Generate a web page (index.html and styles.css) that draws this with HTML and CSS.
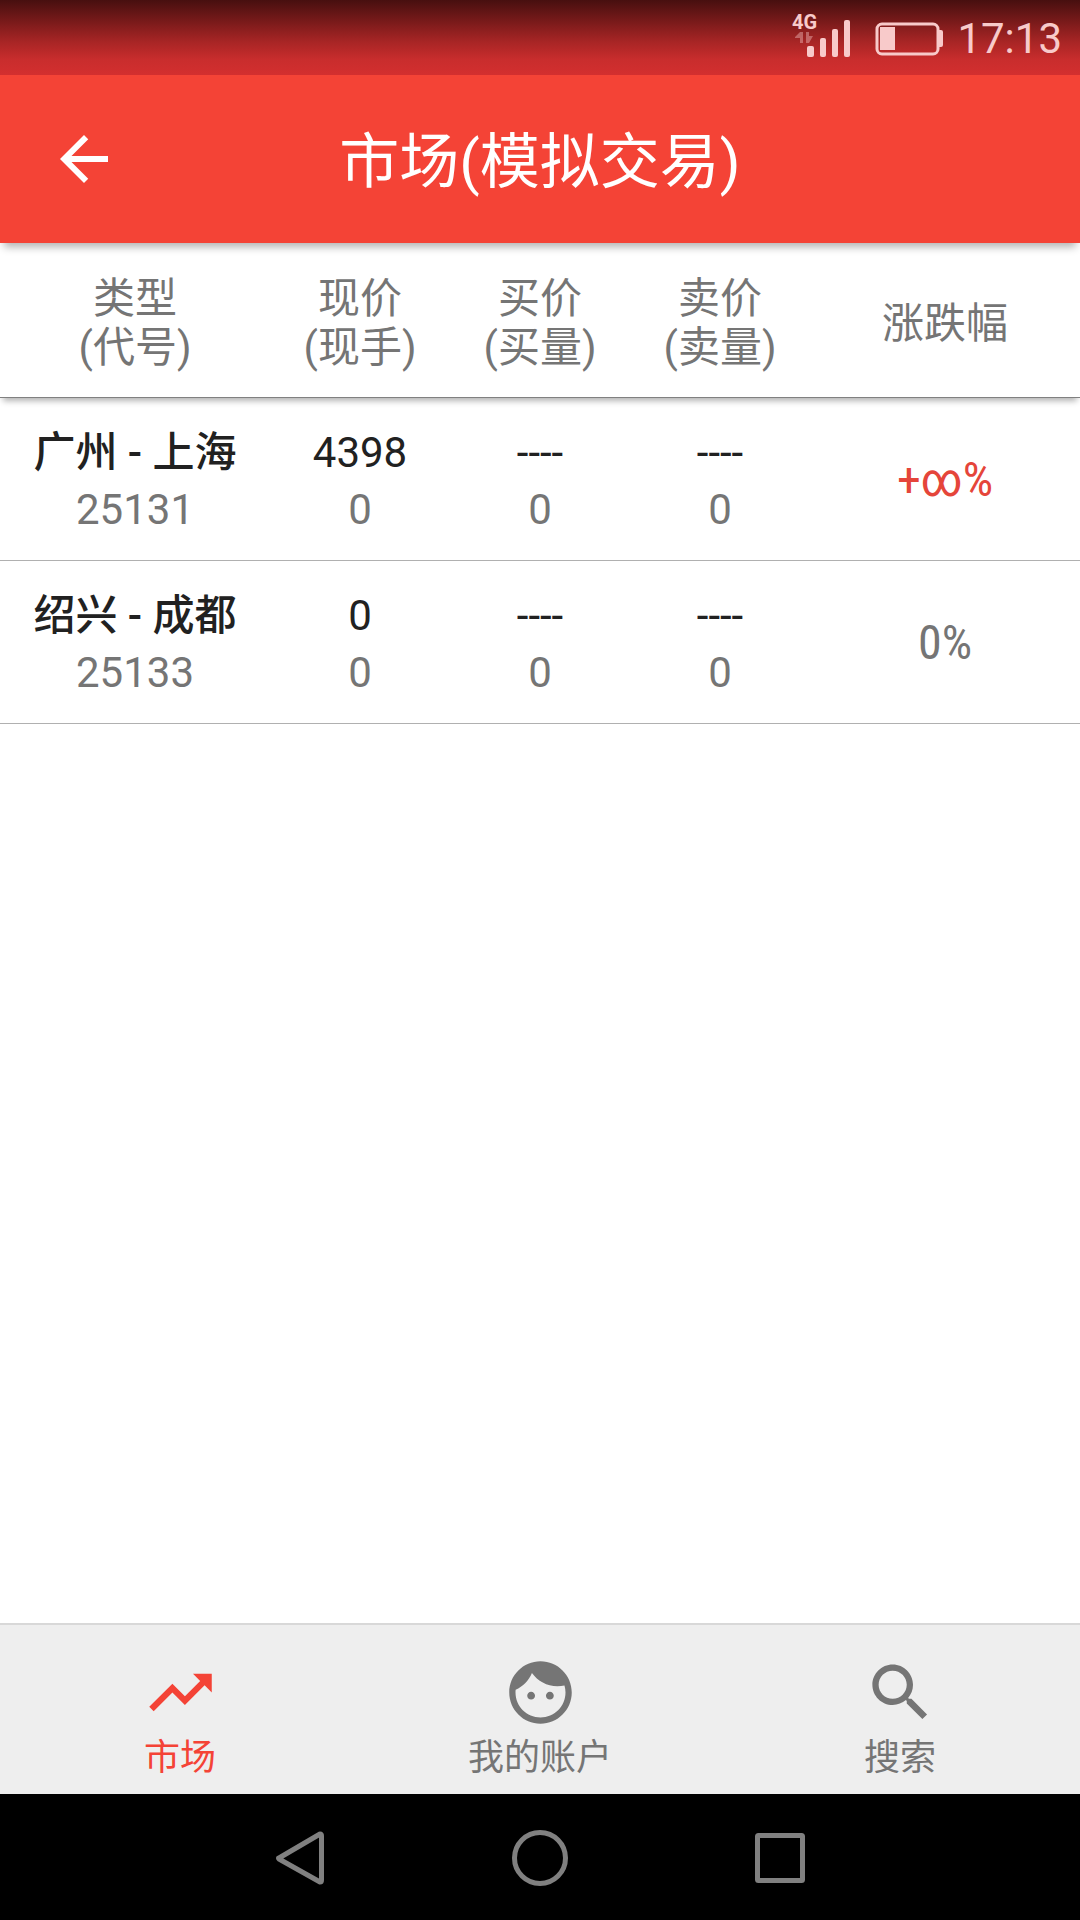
FILE: index.html
```
<!DOCTYPE html>
<html lang="zh-CN">
<head>
<meta charset="utf-8">
<title>市场(模拟交易)</title>
<meta name="viewport" content="width=device-width, initial-scale=1.0">
<link rel="stylesheet" href="styles.css">
</head>
<body>

<div class="status-bar">
<svg class="signal" width="60" height="48" viewBox="0 0 60 48">
<text x="0" y="20">4G</text>
<path opacity=".4" d="M3 28L8 23H11V34H8V29H3ZM14 23H17V27H21L17 34H14Z"/>
<rect x="15" y="37" width="7" height="11" rx="2"/>
<rect x="28" y="29" width="6" height="19" rx="2"/>
<rect x="40" y="20" width="6" height="28" rx="2"/>
<rect x="52" y="11" width="6" height="37" rx="2"/>
</svg>
<svg class="battery" width="68" height="34" viewBox="0 0 68 34">
<rect x="2" y="2" width="61" height="30" rx="5" fill="none" stroke="currentColor" stroke-width="3"/>
<rect x="5" y="5" width="15" height="23"/>
<path d="M64 8h2q2 0 2 2v13q0 2-2 2h-2z"/>
</svg>
<span class="time">17:13</span>
</div>

<header class="app-bar">
<button class="back" aria-label="返回"><svg width="72" height="72" viewBox="0 0 24 24"><path d="M20 11H7.83l5.59-5.59L12 4l-8 8 8 8 1.41-1.41L7.83 13H20v-2z"/></svg></button>
<h1>市场(模拟交易)</h1>
</header>

<main>
<table class="quotes">
<colgroup>
<col class="wide"><col><col><col><col class="wide">
</colgroup>
<thead>
<tr>
<th>类型<br>(代号)</th>
<th>现价<br>(现手)</th>
<th>买价<br>(买量)</th>
<th>卖价<br>(卖量)</th>
<th>涨跌幅</th>
</tr>
</thead>
<tbody>
<tr>
<td><span class="name">广州 - 上海</span><span class="sub">25131</span></td>
<td>4398<span class="sub">0</span></td>
<td>----<span class="sub">0</span></td>
<td>----<span class="sub">0</span></td>
<td class="change up">+∞%</td>
</tr>
<tr>
<td><span class="name">绍兴 - 成都</span><span class="sub">25133</span></td>
<td>0<span class="sub">0</span></td>
<td>----<span class="sub">0</span></td>
<td>----<span class="sub">0</span></td>
<td class="change">0%</td>
</tr>
</tbody>
</table>
</main>

<nav class="tabs">
<a class="tab active" href="#market">
<svg width="75" height="75" viewBox="0 0 24 24"><path d="M16 6l2.29 2.29-4.88 4.88-4-4L2 16.59 3.41 18l6-6 4 4 6.3-6.29L22 12V6z"/></svg>
市场
</a>
<a class="tab" href="#account">
<svg width="75" height="75" viewBox="0 0 24 24"><path d="M9 11.75c-.69 0-1.25.56-1.25 1.25s.56 1.25 1.25 1.25 1.25-.56 1.25-1.25-.56-1.25-1.25-1.25zm6 0c-.69 0-1.25.56-1.25 1.25s.56 1.25 1.25 1.25 1.25-.56 1.25-1.25-.56-1.25-1.25-1.25zM12 2C6.48 2 2 6.48 2 12s4.48 10 10 10 10-4.48 10-10S17.52 2 12 2zm0 18c-4.41 0-8-3.59-8-8 0-.29.02-.58.05-.86 2.36-1.05 4.23-2.98 5.21-5.37C11.07 8.33 14.05 10 17.42 10c.78 0 1.53-.09 2.25-.26.21.71.33 1.47.33 2.26 0 4.41-3.59 8-8 8z"/></svg>
我的账户
</a>
<a class="tab" href="#search">
<svg width="75" height="75" viewBox="0 0 24 24"><path d="M15.5 14h-.79l-.28-.27C15.41 12.59 16 11.11 16 9.5 16 5.91 13.09 3 9.5 3S3 5.91 3 9.5 5.91 16 9.5 16c1.61 0 3.09-.59 4.23-1.57l.27.28v.79l5 4.99L20.49 19l-4.99-5zm-6 0C7.01 14 5 11.99 5 9.5S7.01 5 9.5 5 14 7.01 14 9.5 11.99 14 9.5 14z"/></svg>
搜索
</a>
</nav>

<div class="system-bar">
<button aria-label="Back"><svg width="60" height="60" viewBox="0 0 60 60"><path d="M9 30L50 6Q51.5 6 51.5 8V52Q51.5 54 50 54L9 31Q8 30 9 30Z"/></svg></button>
<button aria-label="Home"><svg width="60" height="60" viewBox="0 0 60 60"><circle cx="30" cy="30" r="25.5"/></svg></button>
<button aria-label="Recent"><svg width="60" height="60" viewBox="0 0 60 60"><rect x="7.500" y="7.500" width="45" height="45" rx="1"/></svg></button>
</div>

</body>
</html>
```
FILE: styles.css
```
*{box-sizing:border-box;}
body{
margin:0;
min-height:100vh;
display:flex;
flex-direction:column;
background-color:#FFF;
color:#212121;
font-family:Roboto,"Noto Sans CJK SC",sans-serif;
font-size:42px;
}
svg{display:block;fill:currentColor;}
button{
display:flex;
justify-content:center;
align-items:center;
padding:0;
border:0;
background:none;
color:inherit;
}

/* status bar */
.status-bar{
display:flex;
justify-content:flex-end;
align-items:center;
height:75px;
padding:2px 18px 0;
background:linear-gradient(#470F0F,#A82525 56%,#C92D2D 80%,#D32F2F);
color:#F8CACA;
}
.signal{margin:0 23px 12px 0;}
.signal text{font-size:20px;font-weight:bold;}
.battery{margin-right:14px;}

/* title bar */
.app-bar{
display:flex;
align-items:center;
height:168px;
padding:0 48px;
background-color:#F44336;
color:#FFF;
box-shadow:0 8px 8px -4px rgba(0,0,0,.3);
position:relative;
}
.app-bar h1{
flex:1;
margin:0 72px 6px 0;
font-size:60px;
font-weight:400;
text-align:center;
}

/* quotes table */
main{flex:1;}
.quotes{
width:100%;
table-layout:fixed;
border-spacing:0;
text-align:center;
}
.wide{width:25%;}
.quotes thead{box-shadow:0 6px 6px -3px rgba(0,0,0,.3);}
.quotes th{
padding:31px 0 25px;
border-bottom:1px solid #808080;
color:#757575;
font-weight:400;
line-height:49px;
}
.quotes td{
padding:26px 0 22px;
border-bottom:1px solid #B0B0B0;
line-height:57px;
}
.name{font-weight:500;}
.sub{display:block;color:#757575;}
.quotes .change{
padding:24px 0;
color:#757575;
font-family:"Roboto Condensed","Liberation Sans Narrow",Roboto,sans-serif;
font-size:48px;
}
.quotes .up{color:#E5453A;}

/* bottom tabs */
.tabs{
display:flex;
height:171px;
border-top:2px solid #D8D8D8;
background-color:#EEE;
}
.tab{
flex:1;
display:flex;
flex-direction:column;
align-items:center;
padding-top:30px;
color:#757575;
font-size:36px;
line-height:56px;
text-decoration:none;
}
.active{color:#F44336;}

/* android buttons */
.system-bar{
display:flex;
height:126px;
padding:2px 16.6667% 0;
background-color:#000;
color:#808080;
}
.system-bar button{flex:1;}
.system-bar svg{fill:none;stroke:currentColor;stroke-width:5;stroke-linejoin:round;}
```
